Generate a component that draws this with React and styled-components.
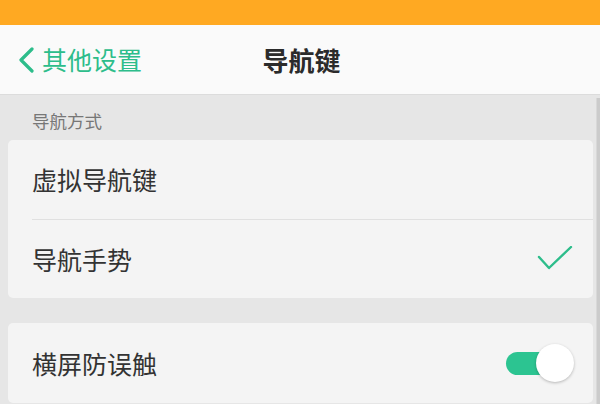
import React from "react";
import styled, { createGlobalStyle } from "styled-components";

const Global = createGlobalStyle`
  html, body { margin: 0; padding: 0; background: #e6e6e6; }
  body { font-family: "Noto Sans CJK SC", "Noto Sans", sans-serif; }
  * { box-sizing: border-box; }
`;

const Screen = styled.div`
  width: 600px;
  height: 404px;
  overflow: hidden;
  display: flex;
  flex-direction: column;
  background: #e6e6e6;
`;

const StatusBar = styled.div`
  height: 25px;
  flex: none;
  background: #ffa922;
`;

const Header = styled.header`
  height: 70px;
  flex: none;
  background: #fafafa;
  border-bottom: 1px solid #dcdcdc;
  display: grid;
  grid-template-columns: 1fr auto 1fr;
  align-items: center;
`;

const Back = styled.div`
  display: flex;
  align-items: center;
  gap: 7px;
  padding-left: 17px;
  color: #2dbd8b;
  font-size: 25px;
  line-height: 1;
`;

const Title = styled.h1`
  margin: 0;
  font-size: 26px;
  font-weight: 700;
  color: #2b2b2b;
  line-height: 1;
  padding-left: 3px;
`;

const Body = styled.div`
  flex: 1;
  display: flex;
  min-height: 0;
`;

const Content = styled.div`
  flex: 1;
  padding: 0 3px 0 8px;
  display: flex;
  flex-direction: column;
`;

const Scrollbar = styled.div`
  width: 4px;
  flex: none;
  margin-top: 3px;
  background: #cbcbcb;
  border-left: 1px solid #d8d8d8;
`;

const SectionLabel = styled.div`
  height: 45px;
  padding: 17px 0 0 24px;
  font-size: 17.5px;
  line-height: 1;
  color: #777;
`;

const Card = styled.div`
  background: #f4f4f4;
  border-radius: 5px;
  margin-bottom: ${(p) => p.$gap || 0}px;
  display: flex;
  flex-direction: column;
`;

const Row = styled.div`
  height: ${(p) => p.$h}px;
  display: flex;
  align-items: center;
  justify-content: space-between;
  padding: 0 20px 0 24px;
  font-size: 25px;
  color: #333;
  line-height: 1;
`;

const Divider = styled.div`
  height: 1px;
  margin-left: 24px;
  background: #e0e0e0;
`;

const Toggle = styled.div`
  position: relative;
  width: 68px;
  height: 40px;
  display: flex;
  align-items: center;
  margin-right: -1px;
`;

const Track = styled.div`
  width: 50px;
  height: 23px;
  border-radius: 12px;
  background: #2cc491;
`;

const Knob = styled.div`
  position: absolute;
  right: 0;
  top: 1px;
  width: 38px;
  height: 38px;
  border-radius: 50%;
  background: #fff;
  box-shadow: 0 1px 3px rgba(0, 0, 0, 0.25);
`;

const Chevron = () => (
  <svg width="18" height="26" viewBox="0 0 18 26">
    <path d="M15 2 L4 13 L15 24" fill="none" stroke="#2dbd8b" strokeWidth="3.2" strokeLinecap="round" strokeLinejoin="round" />
  </svg>
);

const Check = () => (
  <svg width="36" height="26" viewBox="0 0 36 26">
    <path d="M2 11 L12 22 L34 1" fill="none" stroke="#2dbd8b" strokeWidth="2.4" strokeLinecap="round" strokeLinejoin="round" />
  </svg>
);

export default function App() {
  return (
    <>
      <Global />
      <Screen>
        <StatusBar />
        <Header>
          <Back>
            <Chevron />
            <span>其他设置</span>
          </Back>
          <Title>导航键</Title>
          <div />
        </Header>
        <Body>
          <Content>
            <SectionLabel>导航方式</SectionLabel>
            <Card $gap={25}>
              <Row $h={79}>
                <span>虚拟导航键</span>
              </Row>
              <Divider />
              <Row $h={78}>
                <span>导航手势</span>
                <Check />
              </Row>
            </Card>
            <Card>
              <Row $h={80}>
                <span>横屏防误触</span>
                <Toggle>
                  <Track />
                  <Knob />
                </Toggle>
              </Row>
            </Card>
          </Content>
          <Scrollbar />
        </Body>
      </Screen>
    </>
  );
}
